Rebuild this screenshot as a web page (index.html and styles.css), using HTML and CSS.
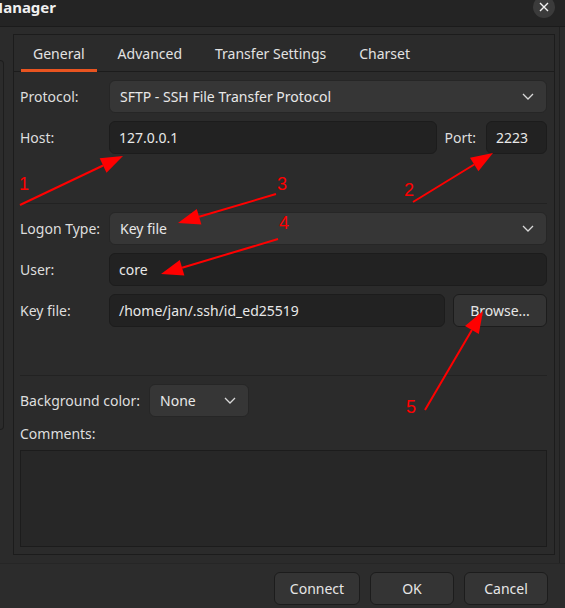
FILE: index.html
```html
<!DOCTYPE html>
<html>
<head>
<meta charset="utf-8">
<link rel="stylesheet" href="styles.css">
</head>
<body>
<div class="titlebar">
  <span class="title">Manager</span>
  <div class="close"><svg width="10" height="10" viewBox="0 0 10 10"><path d="M1 1L9 9M9 1L1 9" stroke="#f0f0f0" stroke-width="1.4" fill="none"/></svg></div>
</div>
<div class="main">
  <div class="side"></div>
  <div class="notebook">
    <div class="tabs">
      <div class="tab active">General</div>
      <div class="tab">Advanced</div>
      <div class="tab">Transfer Settings</div>
      <div class="tab">Charset</div>
    </div>
    <div class="page">
      <div class="row">
        <span class="label">Protocol:</span>
        <div class="field combo grow"><span>SFTP - SSH File Transfer Protocol</span><svg class="chev" width="12" height="7" viewBox="0 0 12 7"><path d="M1 1L6 6L11 1" stroke="#d8d8d8" stroke-width="1.3" fill="none"/></svg></div>
      </div>
      <div class="row">
        <span class="label">Host:</span>
        <div class="field grow">127.0.0.1</div>
        <span class="label-port">Port:</span>
        <div class="field port">2223</div>
      </div>
      <div class="sep sep1"></div>
      <div class="row">
        <span class="label">Logon Type:</span>
        <div class="field combo grow"><span>Key file</span><svg class="chev" width="12" height="7" viewBox="0 0 12 7"><path d="M1 1L6 6L11 1" stroke="#d8d8d8" stroke-width="1.3" fill="none"/></svg></div>
      </div>
      <div class="row">
        <span class="label">User:</span>
        <div class="field grow">core</div>
      </div>
      <div class="row">
        <span class="label">Key file:</span>
        <div class="field grow">/home/jan/.ssh/id_ed25519</div>
        <div class="btn browse">Browse...</div>
      </div>
      <div class="sep sep2"></div>
      <div class="row">
        <span class="label-bg">Background color:</span>
        <div class="field combo bgcombo"><span>None</span><svg class="chev" width="12" height="7" viewBox="0 0 12 7"><path d="M1 1L6 6L11 1" stroke="#d8d8d8" stroke-width="1.3" fill="none"/></svg></div>
      </div>
      <div class="comments-label">Comments:</div>
      <div class="comments"></div>
    </div>
  </div>
  <div class="edge"></div>
</div>
<div class="buttonbar">
  <div class="btn connect">Connect</div>
  <div class="btn ok">OK</div>
  <div class="btn cancel">Cancel</div>
</div>
<svg class="annot" width="565" height="608" viewBox="0 0 565 608">
  <g stroke="#ff0000" stroke-width="2" fill="none">
    <line x1="20" y1="205" x2="103.1" y2="165.5"/>
    <line x1="413" y1="202" x2="474.2" y2="164.5"/>
    <line x1="276" y1="194" x2="199.1" y2="216.8"/>
    <line x1="278" y1="239" x2="182.1" y2="267.7"/>
    <line x1="425" y1="410" x2="471.9" y2="330"/>
  </g>
  <g fill="#ff0000">
    <polygon points="123,156 106.5,172.7 99.7,158.3"/>
    <polygon points="493,153 478.4,171.3 470,157.7"/>
    <polygon points="178,223 201.4,224.5 196.8,209.1"/>
    <polygon points="161,274 184.4,275.4 179.8,260"/>
    <polygon points="483,311 478.8,334 465,326"/>
  </g>
  <g class="nums" fill="#ff0000">
    <text x="19" y="190">1</text>
    <text x="404" y="196">2</text>
    <text x="277" y="190">3</text>
    <text x="279" y="229">4</text>
    <text x="406" y="413">5</text>
  </g>
</svg>
</body>
</html>
```

FILE: styles.css
```css
* { box-sizing: border-box; margin: 0; padding: 0; }
html, body { width: 565px; height: 608px; overflow: hidden; }
body {
  background: #2b2b2b;
  font-family: "Noto Sans", sans-serif;
  font-size: 14px;
  color: #dedede;
  position: relative;
  display: flex;
  flex-direction: column;
}
.titlebar {
  height: 27px;
  flex: none;
  background: #242424;
  border-bottom: 1px solid #1b1b1b;
  display: flex;
  justify-content: space-between;
  align-items: flex-start;
  overflow: hidden;
}
.title {
  font-weight: bold;
  font-size: 15px;
  line-height: 18px;
  margin-left: -11px;
  margin-top: -2px;
  color: #f0f0f0;
}
.close {
  width: 22px;
  height: 22px;
  border-radius: 50%;
  background: #3b3b3b;
  margin-top: -4px;
  margin-right: 10px;
  display: flex;
  align-items: center;
  justify-content: center;
}
.main {
  flex: 1;
  display: flex;
  align-items: flex-start;
}
.side {
  width: 4px;
  height: 370px;
  margin-top: 33px;
  border: 1px solid #1d1d1d;
  border-left: none;
  border-radius: 0 5px 5px 0;
  flex: none;
}
.notebook {
  margin-left: 9px;
  margin-top: 7px;
  width: 542px;
  height: 521px;
  border: 1px solid #1c1c1c;
  display: flex;
  flex-direction: column;
  flex: none;
}
.tabs {
  height: 37px;
  border-bottom: 1px solid #1c1c1c;
  display: flex;
  padding-left: 7px;
  gap: 9px;
  flex: none;
}
.tab {
  height: 37px;
  margin-bottom: -1px;
  padding: 0 12px;
  display: flex;
  align-items: center;
  color: #e2e2e2;
}
.tab.active { box-shadow: inset 0 -3px 0 #e95420; }
.page {
  padding: 8px 7px 0 6px;
  display: flex;
  flex-direction: column;
}
.row {
  display: flex;
  align-items: center;
  height: 33px;
  margin-bottom: 8px;
}
.label { width: 89px; flex: none; }
.label-port { margin-left: 7px; margin-right: 10px; }
.label-bg { margin-right: 9px; }
.field {
  height: 33px;
  border: 1px solid #1c1c1c;
  border-radius: 6px;
  background: #222222;
  padding: 0 9px;
  display: flex;
  align-items: center;
  color: #e8e8e8;
}
.grow { flex: 1; }
.port { width: 61px; flex: none; }
.combo {
  background: #363636;
  border-color: #262626;
  padding: 0 12px 0 10px;
  justify-content: space-between;
}
.bgcombo { width: 100px; }
.btn {
  height: 33px;
  border: 1px solid #1c1c1c;
  border-radius: 6px;
  background: #343434;
  color: #e6e6e6;
  display: flex;
  align-items: center;
  justify-content: center;
  flex: none;
}
.browse { width: 94px; margin-left: 8px; }
.sep {
  height: 1px;
  background: #222222;
  flex: none;
}
.sep1 { margin-top: 41px; margin-bottom: 8px; }
.sep2 { margin-top: 40px; margin-bottom: 8px; }
.comments-label { line-height: 20px; margin-top: -1px; }
.comments {
  margin-top: 6px;
  height: 97px;
  border: 1px solid #1c1c1c;
  background: #272727;
}
.edge {
  margin-left: 4px;
  width: 1px;
  align-self: stretch;
  background: #202020;
}
.buttonbar {
  height: 45px;
  flex: none;
  border-top: 1px solid #262626;
  background: #2c2c2c;
  display: flex;
  justify-content: flex-end;
  gap: 10px;
  padding: 8px 17px 0 0;
  align-items: flex-start;
}
.connect { width: 86px; }
.ok, .cancel { width: 84px; }
.annot {
  position: absolute;
  left: 0;
  top: 0;
  pointer-events: none;
}
.nums text {
  font-family: "Liberation Sans", sans-serif;
  font-size: 18px;
}
```
